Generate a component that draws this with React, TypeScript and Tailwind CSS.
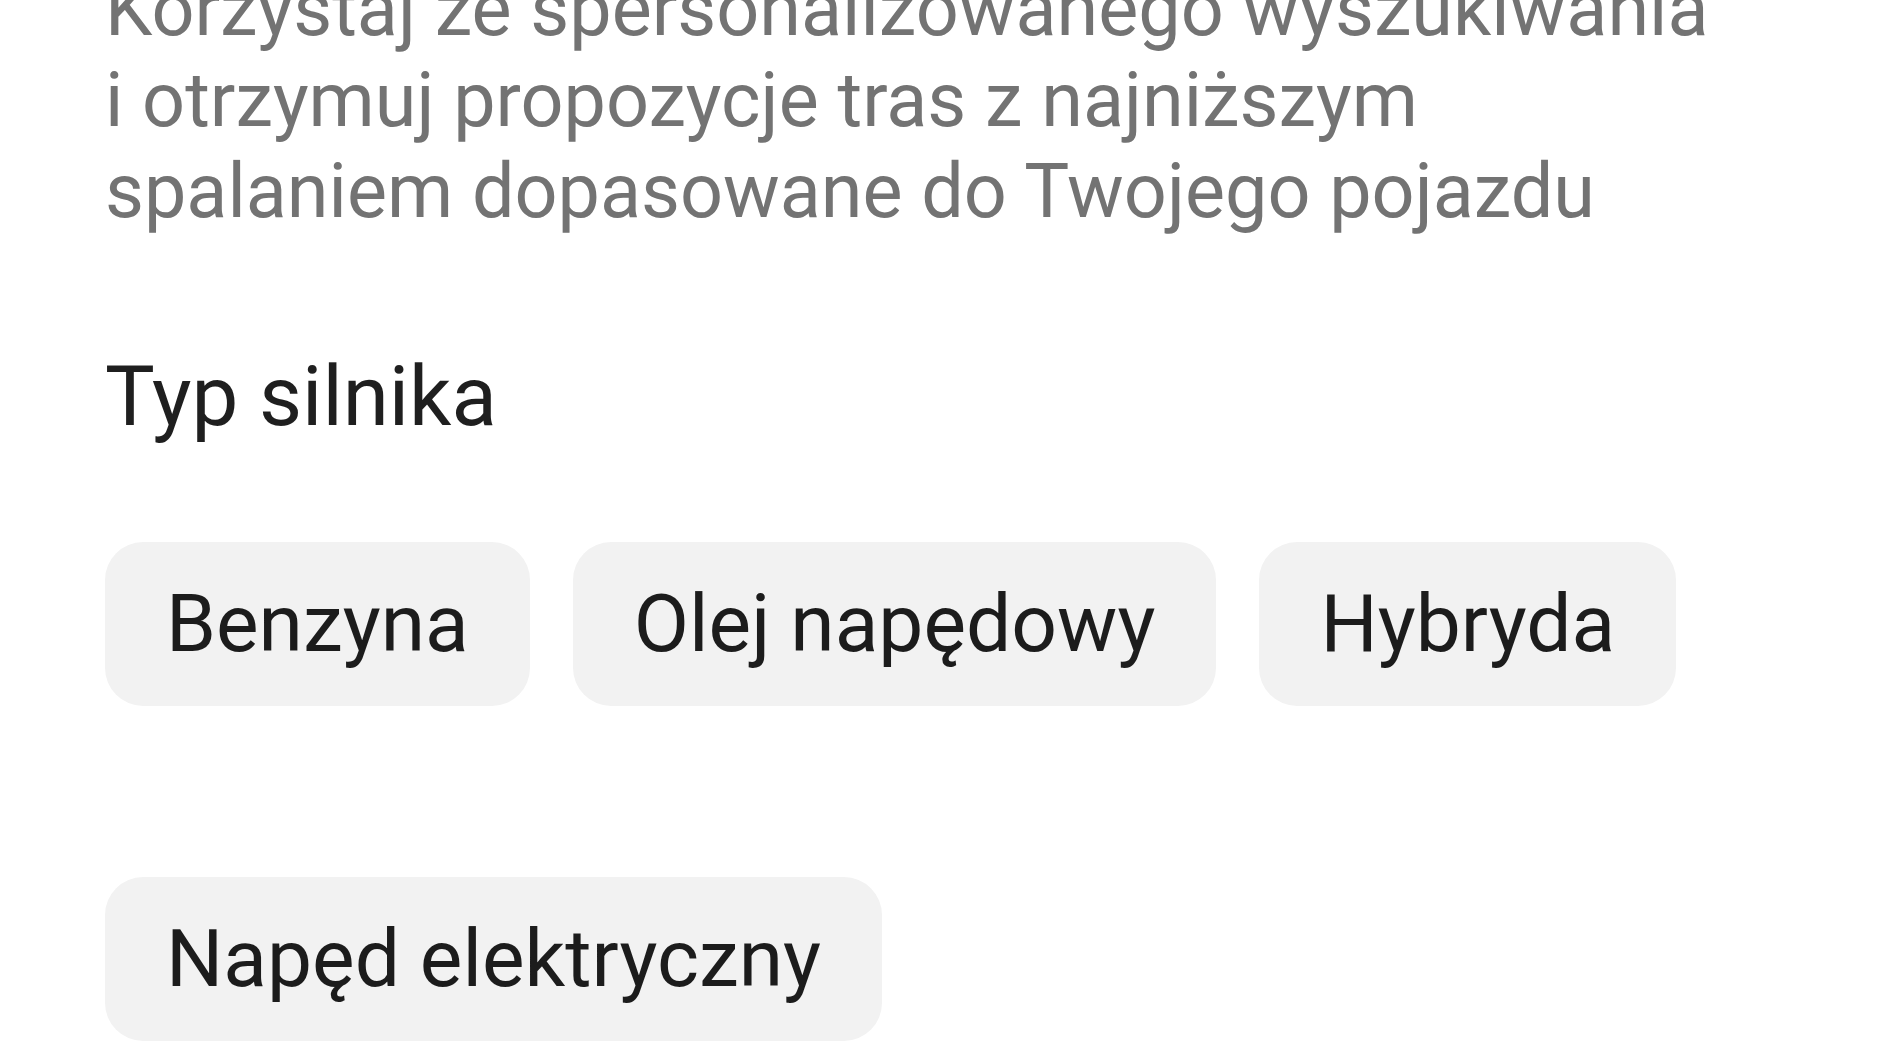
export default function App() {
  const chips = ["Benzyna", "Olej napędowy", "Hybryda", "Napęd elektryczny"];

  return (
    <div className="h-[1058px] w-[1880px] overflow-hidden bg-white font-['Roboto',sans-serif]">
      <div className="pl-[105px] pr-[100px]">
        <p className="mt-[-36px] text-[75.5px] leading-[91px] text-[#737373]">
          Korzystaj ze spersonalizowanego wyszukiwania
          <br />
          i otrzymuj propozycje tras z najniższym
          <br />
          spalaniem dopasowane do Twojego pojazdu
        </p>

        <h2 className="mt-[110px] text-[83.5px] leading-[100px] text-[#1f1f1f]">Typ silnika</h2>

        <div className="mt-[95px] flex max-w-[1620px] flex-wrap gap-x-[43px] gap-y-[171px]">
          {chips.map((chip) => (
            <button
              key={chip}
              className="flex h-[164px] items-center rounded-[38px] bg-[#f2f2f2] px-[61px] text-[80.3px] text-[#1c1c1c]"
            >
              {chip}
            </button>
          ))}
        </div>
      </div>
    </div>
  );
}
